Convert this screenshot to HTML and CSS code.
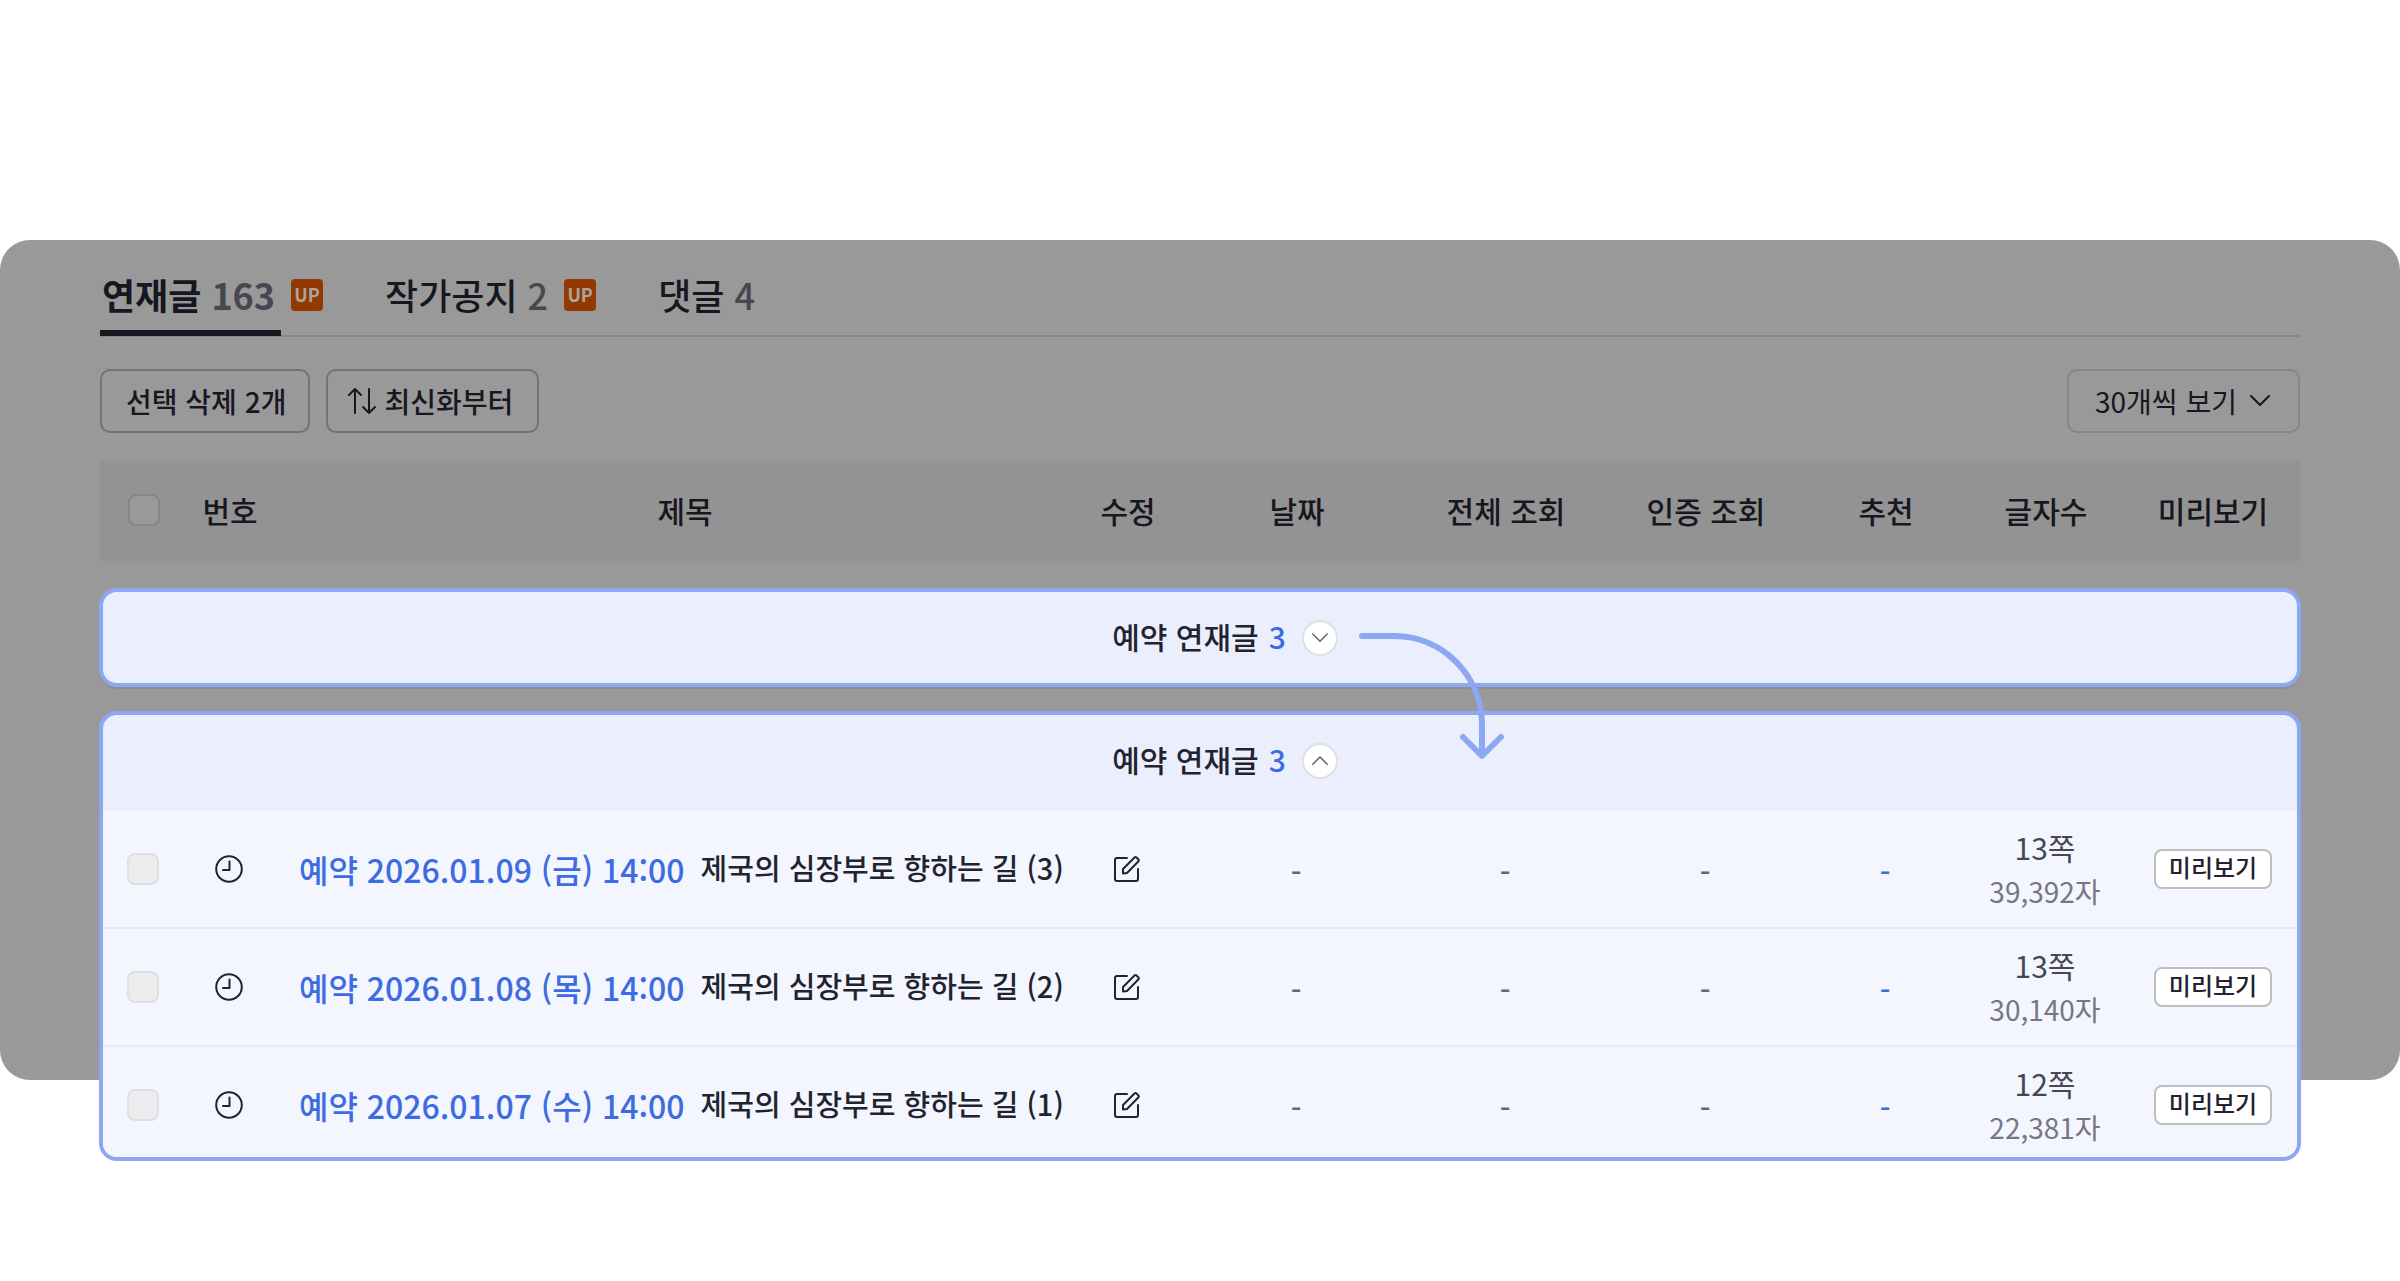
FILE: index.html
```html
<!DOCTYPE html>
<html lang="ko">
<head>
    <meta charset="UTF-8">
    <meta name="viewport" content="width=device-width, initial-scale=1.0">
    <title>연재글 관리</title>
    <link rel="stylesheet" href="styles.css">
</head>
<body>
    <svg class="sprite" aria-hidden="true">
        <symbol id="icon-clock" viewBox="0 0 28 28">
            <circle cx="14" cy="14" r="12.8"/>
            <path d="M14.5 6.5V15H8"/>
        </symbol>
        <symbol id="icon-edit" viewBox="0 0 28 28">
            <path d="M14 3H4Q2 3 2 5V24Q2 26 4 26H23Q25 26 25 24V14"/>
            <path d="M10 18.500V14L21.500 2.500Q22.500 1.600 23.500 2.500L25.500 4.500Q26.300 5.400 25.500 6.300L14 18Z"/>
        </symbol>
        <symbol id="icon-down" viewBox="0 0 20 20">
            <path d="M1 5L10 14L19 5"/>
        </symbol>
        <symbol id="icon-up" viewBox="0 0 20 20">
            <path d="M1 14L10 5L19 14"/>
        </symbol>
    </svg>

    <main class="page">
        <div class="panel">
            <nav class="tabs">
                <a class="tab active" href="#posts"><span class="tab-label">연재글 <span class="count">163</span></span><span class="badge">UP</span></a>
                <a class="tab" href="#notice"><span class="tab-label">작가공지 <span class="count">2</span></span><span class="badge">UP</span></a>
                <a class="tab" href="#comments"><span class="tab-label">댓글 <span class="count">4</span></span></a>
            </nav>

            <div class="toolbar">
                <button type="button" class="tool-btn">선택 삭제 2개</button>
                <button type="button" class="tool-btn sort-btn">
                    <svg class="sort-icon" viewBox="0 0 28 28"><path d="M7 26V2M1 8L7 2L13 8M21 2V26M15 20L21 26L27 20"/></svg>최신화부터
                </button>
                <div class="page-size">
                    <select aria-label="보기 개수">
                        <option>30개씩 보기</option>
                    </select>
                    <svg class="select-icon"><use href="#icon-down"/></svg>
                </div>
            </div>

            <table class="list list-head">
                <colgroup>
                    <col class="col-check"><col class="col-no"><col><col class="col-edit"><col class="col-date"><col class="col-total"><col class="col-auth"><col class="col-like"><col class="col-length"><col class="col-preview">
                </colgroup>
                <thead>
                    <tr>
                        <th><input type="checkbox" aria-label="전체 선택"></th>
                        <th>번호</th>
                        <th>제목</th>
                        <th>수정</th>
                        <th>날짜</th>
                        <th>전체 조회</th>
                        <th>인증 조회</th>
                        <th>추천</th>
                        <th>글자수</th>
                        <th>미리보기</th>
                    </tr>
                </thead>
            </table>
        </div>

        <div class="reserved">
            <section class="box closed">
                <div class="box-head">예약 연재글 <span class="num">3</span>
                    <button type="button" class="toggle" aria-label="펼치기"><svg viewBox="0 0 20 20"><use href="#icon-down"/></svg></button>
                </div>
            </section>

            <section class="box opened">
                <div class="box-head">예약 연재글 <span class="num">3</span>
                    <button type="button" class="toggle" aria-label="접기"><svg viewBox="0 0 20 20"><use href="#icon-up"/></svg></button>
                </div>
                <table class="list list-body">
                    <colgroup>
                        <col class="col-check"><col class="col-no"><col><col class="col-edit"><col class="col-date"><col class="col-total"><col class="col-auth"><col class="col-like"><col class="col-length"><col class="col-preview">
                    </colgroup>
                    <tbody>
                        <tr>
                            <td><input type="checkbox" aria-label="(3) 선택" disabled></td>
                            <td><svg class="icon"><use href="#icon-clock"/></svg></td>
                            <td class="title"><span class="when">예약 2026.01.09 (금) 14:00</span><a href="#3">제국의 심장부로 향하는 길 (3)</a></td>
                            <td><button type="button" class="edit" aria-label="수정"><svg class="icon"><use href="#icon-edit"/></svg></button></td>
                            <td class="dash">-</td>
                            <td class="dash">-</td>
                            <td class="dash">-</td>
                            <td class="dash like">-</td>
                            <td class="length"><p>13쪽</p><p class="chars">39,392자</p></td>
                            <td><button type="button" class="preview">미리보기</button></td>
                        </tr>
                        <tr>
                            <td><input type="checkbox" aria-label="(2) 선택" disabled></td>
                            <td><svg class="icon"><use href="#icon-clock"/></svg></td>
                            <td class="title"><span class="when">예약 2026.01.08 (목) 14:00</span><a href="#2">제국의 심장부로 향하는 길 (2)</a></td>
                            <td><button type="button" class="edit" aria-label="수정"><svg class="icon"><use href="#icon-edit"/></svg></button></td>
                            <td class="dash">-</td>
                            <td class="dash">-</td>
                            <td class="dash">-</td>
                            <td class="dash like">-</td>
                            <td class="length"><p>13쪽</p><p class="chars">30,140자</p></td>
                            <td><button type="button" class="preview">미리보기</button></td>
                        </tr>
                        <tr>
                            <td><input type="checkbox" aria-label="(1) 선택" disabled></td>
                            <td><svg class="icon"><use href="#icon-clock"/></svg></td>
                            <td class="title"><span class="when">예약 2026.01.07 (수) 14:00</span><a href="#1">제국의 심장부로 향하는 길 (1)</a></td>
                            <td><button type="button" class="edit" aria-label="수정"><svg class="icon"><use href="#icon-edit"/></svg></button></td>
                            <td class="dash">-</td>
                            <td class="dash">-</td>
                            <td class="dash">-</td>
                            <td class="dash like">-</td>
                            <td class="length"><p>12쪽</p><p class="chars">22,381자</p></td>
                            <td><button type="button" class="preview">미리보기</button></td>
                        </tr>
                    </tbody>
                </table>
            </section>

            <svg class="arrow" viewBox="0 0 150 130" aria-hidden="true">
                <path d="M4 4H36C85 4 124 44 124 93V122M105 105L124 124L143 105"/>
            </svg>
        </div>
    </main>
</body>
</html>
```
FILE: styles.css
```css
* {
    box-sizing: border-box;
}
body {
    margin: 0;
    background: #fff;
    color: #23232f;
    font-family: "Noto Sans CJK KR", "Noto Sans", sans-serif;
    font-size: 30px;
    font-weight: 500;
}
a {
    color: inherit;
    text-decoration: none;
}
p {
    margin: 0;
}
button, select {
    font: inherit;
    color: inherit;
    cursor: pointer;
}
svg {
    display: block;
    fill: none;
    stroke: currentColor;
    stroke-width: 2;
    stroke-linecap: round;
    stroke-linejoin: round;
}
.sprite {
    position: absolute;
    width: 0;
    height: 0;
}
.page {
    padding: 240px 0 120px;
}

/* dimmed panel */
.panel {
    height: 840px;
    padding: 0 100px;
    border-radius: 30px;
    background: #999;
    color: #17171f;
}
.tabs {
    display: flex;
    gap: 60px;
    height: 97px;
    border-bottom: 2px solid #868686;
}
.tab {
    display: flex;
    align-items: center;
    gap: 10px;
    font-size: 36px;
}
.tab-label {
    display: flex;
    align-items: center;
    gap: 10px;
    height: 96px;
    padding: 18px 6px 0 2px;
    border-bottom: 6px solid transparent;
}
.active .tab-label {
    border-bottom-color: #17171f;
    font-weight: 700;
}
.count {
    color: #474752;
}
.badge {
    display: flex;
    align-items: center;
    justify-content: center;
    width: 32px;
    height: 32px;
    margin-top: 14px;
    padding-bottom: 2px;
    border-radius: 4px;
    background: #933900;
    color: #aaa5a2;
    font-size: 18px;
    font-weight: 700;
}
.toolbar {
    display: flex;
    gap: 16px;
    margin: 32px 0 28px;
}
.tool-btn {
    display: flex;
    align-items: center;
    height: 64px;
    padding: 0 22px 0 24px;
    border: 2px solid #737373;
    border-radius: 10px;
    background: none;
    font-size: 28px;
}
.sort-btn {
    gap: 8px;
    padding: 0 24px 0 20px;
}
.sort-icon {
    width: 28px;
    height: 28px;
}
.page-size {
    position: relative;
    margin-left: auto;
}
.page-size select {
    height: 64px;
    padding: 0 62px 0 26px;
    appearance: none;
    border: 2px solid #868686;
    border-radius: 10px;
    background: none;
    font-size: 28px;
    font-weight: 400;
}
.select-icon {
    position: absolute;
    top: 22px;
    right: 30px;
    width: 20px;
    height: 20px;
    pointer-events: none;
}

/* list table */
.list {
    width: 100%;
    table-layout: fixed;
    border-collapse: separate;
    border-spacing: 0;
}
.list th, .list td {
    padding: 0;
    text-align: center;
    font-weight: 500;
}
.list th:first-child {
    padding-left: 20px;
}
.list th:last-child {
    padding-right: 10px;
}
.col-check { width: 68px; }
.col-no { width: 124px; }
.col-edit { width: 100px; }
.col-date { width: 238px; }
.col-total { width: 180px; }
.col-auth { width: 220px; }
.col-like { width: 140px; }
.col-length { width: 180px; }
.col-preview { width: 164px; }
.list-head {
    background: #939393;
}
.list-head th {
    height: 100px;
    padding-bottom: 2px;
}
.list input {
    display: block;
    width: 32px;
    height: 32px;
    margin: 0 auto;
    appearance: none;
    border: 2px solid #868686;
    border-radius: 8px;
    background: #999;
}
.list-body input {
    border-color: #e0e0e3;
    background: #ececee;
}

/* reserved posts, drawn over the panel */
.reserved {
    position: relative;
    margin: -492px 99px 0;
}
.box {
    overflow: hidden;
    border: 4px solid #8ba8f0;
    border-radius: 18px;
    background: #ebeffd;
}
.closed {
    margin-bottom: 24px;
    box-shadow: 0 2px 0 #8e8e8e;
}
.box-head {
    display: flex;
    align-items: center;
    justify-content: center;
    gap: 10px;
    height: 91px;
    padding: 0 0 4px 50px;
}
.opened .box-head {
    height: 96px;
    padding-bottom: 8px;
}
.num, .when {
    color: #3d6ce2;
}
.toggle {
    display: flex;
    align-items: center;
    justify-content: center;
    width: 36px;
    height: 36px;
    margin: 4px 0 0 6px;
    padding: 0;
    border: 2px solid #e0e0e3;
    border-radius: 50%;
    background: #fff;
    color: #666674;
}
.toggle svg {
    width: 16px;
    height: 16px;
}
.list-body {
    margin-bottom: -8px;
    background: #f3f6fe;
}
.list-body .col-check { width: 64px; }
.list-body .col-preview { width: 162px; }
.list-body td {
    height: 118px;
    border-bottom: 2px solid #e9e9ef;
}
.list-body td:first-child {
    padding-left: 16px;
}
.list-body td:last-child {
    padding-right: 6px;
}
.icon {
    width: 28px;
    height: 28px;
    margin: 0 auto;
}
.edit {
    display: block;
    margin: 0 auto;
    padding: 0;
    border: 0;
    background: none;
}
.list .title {
    padding: 0 0 4px 8px;
    text-align: left;
    white-space: nowrap;
}
.when {
    margin-right: 16px;
    font-size: 32px;
}
.title span, .title a {
    display: inline-block;
    vertical-align: middle;
}
.title a {
    padding-bottom: 4px;
    font-size: 29px;
}
.list .dash {
    padding-top: 4px;
    color: #666674;
}
.list .like {
    color: #3d6ce2;
}
.length {
    line-height: 44px;
    color: #474754;
}
.length p {
    font-weight: 400;
}
.chars {
    color: #777784;
    font-size: 28px;
}
.preview {
    display: block;
    width: 118px;
    height: 40px;
    margin: 0 auto;
    padding: 0 0 4px;
    border: 2px solid #bdbdc3;
    border-radius: 8px;
    background: #fff;
    font-size: 24px;
    line-height: 32px;
}
.arrow {
    position: absolute;
    top: 44px;
    left: calc(50% + 158px);
    width: 150px;
    height: 130px;
    color: #8ba8f0;
    stroke-width: 6;
    pointer-events: none;
}
```
